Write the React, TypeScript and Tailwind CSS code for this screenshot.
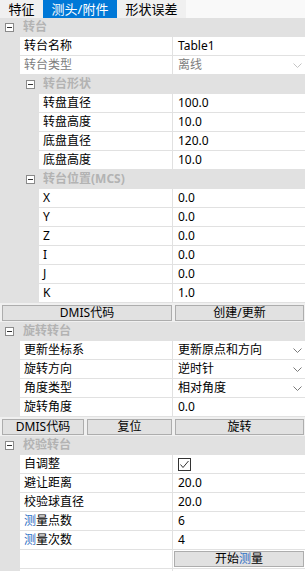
import React from "react";

const Minus = () => (
  <span className="w-[9px] h-[9px] border border-[#8a8a8a] bg-white flex items-center justify-center shrink-0">
    <span className="w-[5px] h-px bg-[#333]" />
  </span>
);

const Chevron = ({ light }: { light?: boolean }) => (
  <svg width="9" height="5" viewBox="0 0 9 5" className="ml-auto mr-[3px]">
    <polyline points="0.5,0.5 4.5,4.5 8.5,0.5" fill="none" stroke={light ? "#c4c4c4" : "#7a7a7a"} strokeWidth="1" />
  </svg>
);

const Header = ({ title, sub }: { title: React.ReactNode; sub?: boolean }) => (
  <div className={`flex items-center h-[19px] border-b border-[#e1e1e1] bg-[#e1e1e1] ${sub ? "pl-[26px]" : "pl-[5px]"}`}>
    <Minus />
    <span className={`font-bold text-[12px] leading-none text-[#b3b3b3] ${sub ? "ml-[8px]" : "ml-[9px]"}`}>{title}</span>
  </div>
);

type RowProps = {
  label: React.ReactNode;
  value?: React.ReactNode;
  sub?: boolean;
  disabled?: boolean;
  select?: boolean;
  check?: boolean;
};

const Row = ({ label, value, sub, disabled, select, check }: RowProps) => (
  <div className="flex h-[19px] border-b border-[#e1e1e1] bg-[#e1e1e1]">
    <div className={`${sub ? "w-[39px]" : "w-[20px]"} shrink-0`} />
    <div
      className={`flex-1 bg-white border-r border-[#e1e1e1] flex items-center pl-[4px] text-[12px] leading-none ${
        disabled ? "text-[#7d7d7d]" : "text-black"
      }`}
    >
      {label}
    </div>
    <div
      className={`w-[132px] shrink-0 bg-white flex items-center pl-[5px] text-[12px] leading-none ${
        disabled ? "text-[#7d7d7d]" : "text-black"
      }`}
    >
      {check ? (
        <span className="w-[13px] h-[13px] border border-[#333] flex items-center justify-center">
          <svg width="11" height="11" viewBox="0 0 11 11">
            <polyline points="1.5,5.5 4,8.5 9.5,2" fill="none" stroke="#333" strokeWidth="1" />
          </svg>
        </span>
      ) : (
        value
      )}
      {select && <Chevron light={disabled} />}
    </div>
  </div>
);

const Btn = ({ children, className }: { children: React.ReactNode; className?: string }) => (
  <div
    className={`h-[16px] bg-[#e1e1e1] border border-[#adadad] flex items-center justify-center text-[12px] leading-none text-black ${className ?? ""}`}
  >
    {children}
  </div>
);

const Blue = ({ children }: { children: React.ReactNode }) => <span className="text-[#2f6fc4]">{children}</span>;

export default function App() {
  return (
    <div
      className="w-[305px] h-[571px] overflow-hidden bg-[#e1e1e1] select-none"
      style={{ fontFamily: "'Noto Sans', 'Noto Sans CJK SC', sans-serif" }}
    >
      <div className="flex h-[18px] bg-[#f9f9f9] text-[13px] leading-none">
        <div className="w-[43px] bg-[#f0f0f0] flex items-center justify-center text-black">特征</div>
        <div className="w-[74px] bg-[#0078d7] flex items-center justify-center text-white">测头/附件</div>
        <div className="w-[69px] bg-[#f0f0f0] flex items-center justify-center text-black">形状误差</div>
      </div>

      <Header title="转台" />
      <Row label="转台名称" value="Table1" />
      <Row label="转台类型" value="离线" disabled select />
      <Header title="转台形状" sub />
      <Row sub label="转盘直径" value="100.0" />
      <Row sub label="转盘高度" value="10.0" />
      <Row sub label="底盘直径" value="120.0" />
      <Row sub label="底盘高度" value="10.0" />
      <Header title="转台位置(MCS)" sub />
      <Row sub label="X" value="0.0" />
      <Row sub label="Y" value="0.0" />
      <Row sub label="Z" value="0.0" />
      <Row sub label="I" value="0.0" />
      <Row sub label="J" value="0.0" />
      <Row sub label="K" value="1.0" />

      <div className="flex items-center h-[19px] bg-[#f0f0f0] pl-[2px] pr-[1px]">
        <Btn className="w-[170px]">DMIS代码</Btn>
        <Btn className="ml-[3px] flex-1">创建/更新</Btn>
      </div>

      <Header title="旋转转台" />
      <Row label="更新坐标系" value="更新原点和方向" select />
      <Row label="旋转方向" value="逆时针" select />
      <Row label="角度类型" value="相对角度" select />
      <Row label="旋转角度" value="0.0" />

      <div className="flex items-center h-[19px] bg-[#f0f0f0] pl-[2px] pr-[1px]">
        <Btn className="w-[82px]">DMIS代码</Btn>
        <Btn className="ml-[3px] w-[85px]">复位</Btn>
        <Btn className="ml-[3px] flex-1">旋转</Btn>
      </div>

      <Header title="校验转台" />
      <Row label="自调整" check />
      <Row label="避让距离" value="20.0" />
      <Row label="校验球直径" value="20.0" />
      <Row label={<><Blue>测</Blue>量点数</>} value="6" />
      <Row label={<><Blue>测</Blue>量次数</>} value="4" />
      <div className="flex h-[19px] border-b border-[#e1e1e1] bg-[#e1e1e1]">
        <div className="w-[20px] shrink-0" />
        <div className="flex-1 bg-white border-r border-[#e1e1e1]" />
        <div className="w-[132px] shrink-0 bg-white flex items-center pl-[1px] pr-[1px]">
          <Btn className="flex-1">
            开始<Blue>测</Blue>量
          </Btn>
        </div>
      </div>
      <Row label="" value="" />
    </div>
  );
}
